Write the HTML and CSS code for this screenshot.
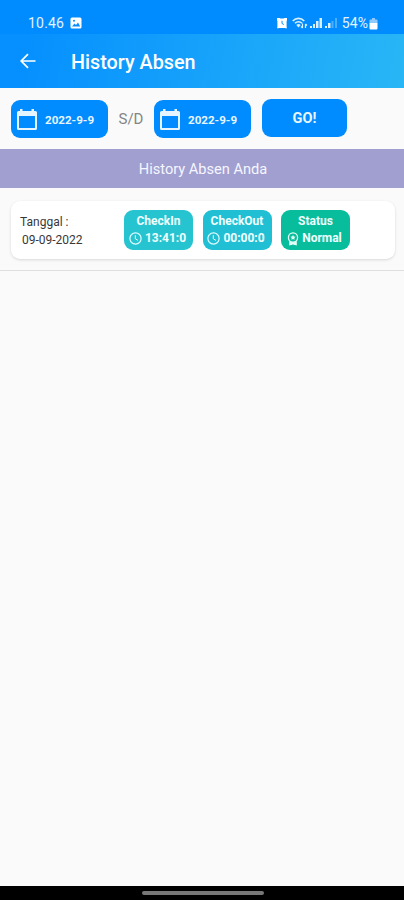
FILE: index.html
```html
<!DOCTYPE html>
<html lang="id">

<head>
  <meta charset="UTF-8" />
  <meta name="viewport" content="width=device-width, initial-scale=1.0" />
  <title>History Absen</title>
  <link rel="stylesheet" href="styles.css">
</head>

<body>
  <div class="statusbar">
    <span class="time">10.46</span>
    <svg class="picture" viewBox="0 0 12 12">
      <rect x="0.5" y="0.5" width="11" height="11" rx="1.500" fill="#fff" />
      <path d="M2 9.5 L4.5 6.5 L6 8 L8 5.5 L10.2 9.5 Z" fill="#0a8cff" />
      <circle cx="4" cy="3.7" r="1" fill="#0a8cff" />
    </svg>
    <div class="status-icons">
      <svg width="12" height="12" viewBox="0 0 12 12">
        <path d="M1 1h2.500l1 .5h3l1-.5H11v2.500l-.4.500V10l.4 1.300H9.500l-.7-.3H3.200l-.7.300H1L1.400 10V4L1 3.500z" fill="#fff" />
        <path d="M6 3.800v2.700l1.800 1" stroke="#0a8cff" stroke-width="1" fill="none" />
      </svg>
      <svg class="wifi" width="16" height="12" viewBox="0 0 16 12" fill="none" stroke="#d8f0ff">
        <path d="M.8 4C4 .4 9 .4 12.200 4" stroke-width="1.700" />
        <path d="M3 6.200c2-2 5-2 7 0" stroke-width="1.600" />
        <path d="M4.300 8c1.200-1.200 3.200-1.200 4.400 0L6.500 10.500z" fill="#d8f0ff" stroke="none" />
        <path d="M10.500 6.500v4.500M9 9.500l1.500 1.500M13.500 11V7M15 8.500L13.500 7" stroke-width="1.200" />
      </svg>
      <svg class="signal" width="13" height="12" viewBox="0 0 13 12" fill="#d8f0ff">
        <rect x="0" y="9" width="2" height="2" />
        <rect x="3" y="7" width="2" height="4" />
        <rect x="6" y="4" width="2.500" height="7" />
        <rect x="9.500" y="1" width="2.500" height="10" />
      </svg>
      <svg class="signal2" width="13" height="12" viewBox="0 0 13 12" fill="#d8f0ff">
        <rect x="0" y="9" width="2" height="2" />
        <rect x="3" y="6" width="2.500" height="5" />
        <rect x="6.500" y="4" width="2" height="7" opacity=".35" />
        <rect x="10" y="1" width="2" height="10" opacity=".35" />
      </svg>
      <span class="percent">54%</span>
      <svg class="battery" width="9" height="13" viewBox="0 0 9 13">
        <path d="M3 1h3v1.500h1.500q1 0 1 1V6h-8V3.500q0-1 1-1H3z" fill="#8fcaff" />
        <path d="M.5 6h8v5.500q0 1-1 1h-6q-1 0-1-1z" fill="#fff" />
      </svg>
    </div>
  </div>

  <div class="appbar">
    <svg class="back" viewBox="0 0 16 16">
      <path d="M15.500 8H1.500M8 1.200L1.200 8L8 14.800" fill="none" stroke="#fff" stroke-width="1.700" />
    </svg>
    <h1>History Absen</h1>
  </div>

  <div class="filter">
    <button class="date">
      <svg class="calendar" viewBox="0 0 22 24">
        <path d="M4 1h2.500v2h9V1H18v2h1.500Q21 3 21 4.500v16q0 1.500-1.500 1.500h-17Q1 22 1 20.500v-16Q1 3 2.500 3H4zM3 8v12h16V8z" fill="#e5f5ff" fill-rule="evenodd" />
      </svg>
      <span>2022-9-9</span>
    </button>
    <span class="sd">S/D</span>
    <button class="date">
      <svg class="calendar" viewBox="0 0 22 24">
        <path d="M4 1h2.500v2h9V1H18v2h1.500Q21 3 21 4.500v16q0 1.500-1.500 1.500h-17Q1 22 1 20.500v-16Q1 3 2.500 3H4zM3 8v12h16V8z" fill="#e5f5ff" fill-rule="evenodd" />
      </svg>
      <span>2022-9-9</span>
    </button>
    <button class="go">GO!</button>
  </div>

  <div class="banner">History Absen Anda</div>

  <div class="list">
    <div class="card">
      <div class="tanggal">
        <p>Tanggal :</p>
        <p class="tgl">09-09-2022</p>
      </div>
      <div class="badge checkin">
        <p>CheckIn</p>
        <div class="value">
          <svg width="13" height="13" viewBox="0 0 13 13" fill="none" stroke="#e2fbff">
            <circle cx="6.500" cy="6.500" r="5.600" stroke-width="1.200" />
            <path d="M6.300 3.200v3.600l2.700 1.600" />
          </svg>
          <span>13:41:0</span>
        </div>
      </div>
      <div class="badge checkout">
        <p>CheckOut</p>
        <div class="value">
          <svg width="13" height="13" viewBox="0 0 13 13" fill="none" stroke="#e2fbff">
            <circle cx="6.500" cy="6.500" r="5.600" stroke-width="1.200" />
            <path d="M6.300 3.200v3.600l2.700 1.600" />
          </svg>
          <span>00:00:0</span>
        </div>
      </div>
      <div class="badge status">
        <p>Status</p>
        <div class="value">
          <svg width="12" height="14" viewBox="0 0 12 14">
            <circle cx="6" cy="5.500" r="4.600" fill="none" stroke="#e5fff8" stroke-width="1.300" />
            <path d="M6 3l.8 1.500 1.700.3-1.200 1.200.3 1.700L6 7l-1.600.7.3-1.700-1.200-1.200 1.700-.3zM2.200 9q3.800 2.400 7.600 0V13.500L6 12.400 2.200 13.500z" fill="#e5fff8" />
          </svg>
          <span>Normal</span>
        </div>
      </div>
    </div>
  </div>

  <div class="navbar">
    <div class="pill"></div>
  </div>
</body>

</html>
```

FILE: styles.css
```css
* {
  box-sizing: border-box;
}

body {
  margin: 0;
  height: 900px;
  display: flex;
  flex-direction: column;
  background: #fafafa;
  font-family: Roboto, "Liberation Sans", sans-serif;
  overflow: hidden;
}

p {
  margin: 0;
}

svg {
  display: block;
  flex-shrink: 0;
}

.statusbar {
  height: 34px;
  padding: 12px 26px 0 28px;
  display: flex;
  align-items: center;
  background: #008cff;
  color: #e2f3ff;
}

.time {
  font-size: 14px;
  line-height: 22px;
  letter-spacing: 0.2px;
}

.picture {
  width: 12px;
  height: 12px;
  margin-left: 6px;
}

.status-icons {
  margin-left: auto;
  display: flex;
  align-items: center;
}

.wifi {
  margin-left: 4px;
}

.signal,
.signal2 {
  margin-left: 2px;
}

.percent {
  margin-left: 4px;
  font-size: 14px;
  letter-spacing: 0.1px;
}

.battery {
  margin-left: 1px;
}

.appbar {
  height: 54px;
  padding-left: 20px;
  display: flex;
  align-items: center;
  background: linear-gradient(100deg, #058fff 5%, #29b6f6 100%);
  color: #fff;
}

.back {
  width: 16px;
  height: 16px;
}

.appbar h1 {
  margin: 2px 0 0 35px;
  font-size: 19.8px;
  font-weight: 500;
}

.filter {
  height: 61px;
  padding: 11px 11px 0;
  display: flex;
}

button {
  border: none;
  border-radius: 9px;
  background: #008cff;
  color: #e8f6ff;
  font-family: inherit;
  font-weight: 700;
}

.date {
  width: 97px;
  height: 38px;
  margin-top: 1px;
  padding: 1px 0 0 5px;
  display: flex;
  align-items: center;
  font-size: 11.6px;
}

.calendar {
  width: 22px;
  height: 24px;
  margin-right: 7px;
}

.sd {
  width: 46px;
  line-height: 40px;
  text-align: center;
  font-size: 15px;
  color: #858585;
}

.go {
  width: 85px;
  height: 38px;
  margin-left: 11px;
  padding: 1px 0 0;
  font-size: 14.5px;
  font-weight: 700;
}

.banner {
  height: 39px;
  line-height: 41px;
  padding-left: 2px;
  background: #a09fd0;
  color: #f6f6ff;
  text-align: center;
  font-size: 14.6px;
}

.list {
  height: 83px;
  padding: 13px 9px 0 11px;
  border-bottom: 1px solid #dedede;
}

.card {
  height: 58px;
  padding: 9px 0 0 9px;
  display: flex;
  background: #fff;
  border-radius: 9px;
  box-shadow: 0 1px 3px rgba(0, 0, 0, 0.14);
}

.tanggal {
  width: 104px;
  padding-top: 3px;
  font-size: 12px;
  line-height: 18px;
  color: #383838;
}

.tgl {
  padding-left: 2px;
}

.badge {
  width: 69px;
  height: 40px;
  margin-right: 9.5px;
  padding-top: 3px;
  border-radius: 9px;
  color: #f0ffff;
  font-size: 12px;
  font-weight: 700;
  line-height: 17px;
  text-align: center;
}

.checkin {
  background: #26c4d0;
}

.checkout {
  background: #20bfd3;
}

.status {
  background: #08bd9b;
}

.value {
  padding-right: 2px;
  display: flex;
  align-items: center;
  justify-content: center;
  gap: 3px;
}

.navbar {
  height: 14px;
  margin-top: auto;
  padding: 5px 0 0 2px;
  background: #000;
}

.pill {
  width: 122px;
  height: 4px;
  margin: 0 auto;
  border-radius: 2px;
  background: #777;
}
```
